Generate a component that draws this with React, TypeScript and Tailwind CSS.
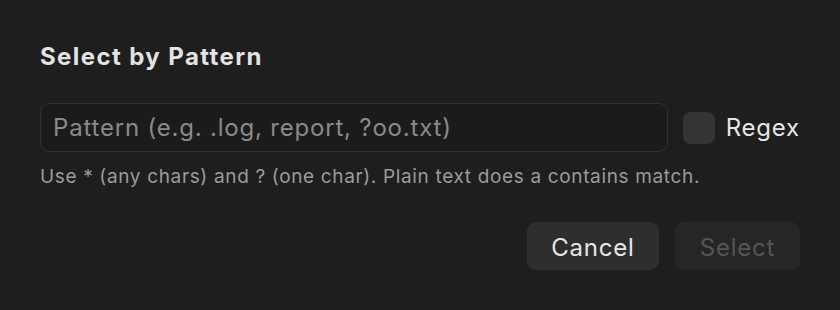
import React from "react";

export default function App() {
  return (
    <div
      className="w-[840px] h-[310px] bg-[#1e1e1e] px-10 pt-[41px] box-border"
      style={{ fontFamily: "Inter, 'Noto Sans', sans-serif" }}
    >
      <h1 className="text-[24px] leading-[32px] font-bold text-[#e3e3e3] tracking-[1.4px]">
        Select by Pattern
      </h1>
      <div className="mt-[30px] flex items-center">
        <div className="flex-1 h-[49px] rounded-[9px] border border-[#303030] bg-[#1b1b1b] flex items-center px-[12px]">
          <span className="text-[24px] tracking-[0.8px] text-[#8a8a8a]">
            Pattern (e.g. .log, report, ?oo.txt)
          </span>
        </div>
        <div className="ml-[15px] w-[32px] h-[32px] rounded-[8px] bg-[#343434]" />
        <span className="ml-[11px] text-[24px] tracking-[0.8px] text-[#e6e6e6]">Regex</span>
      </div>
      <p className="mt-[13px] text-[19px] leading-[24px] tracking-[0.65px] text-[#9b9b9b]">
        Use * (any chars) and ? (one char). Plain text does a contains match.
      </p>
      <div className="mt-[33px] flex justify-end gap-4">
        <button className="w-[132px] h-[48px] pt-[3px] rounded-[9px] bg-[#2e2e2e] text-[24px] tracking-[0.8px] text-[#e6e6e6]">
          Cancel
        </button>
        <button className="w-[125px] h-[48px] pt-[3px] rounded-[9px] bg-[#262626] text-[24px] tracking-[0.8px] text-[#555555]">
          Select
        </button>
      </div>
    </div>
  );
}
